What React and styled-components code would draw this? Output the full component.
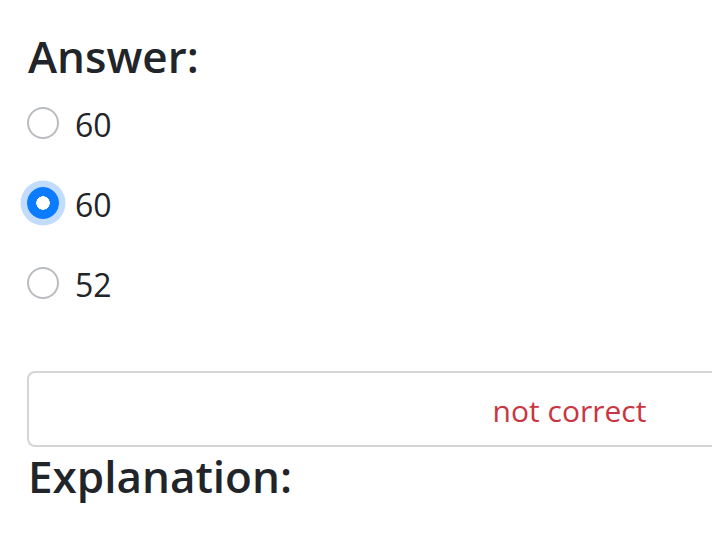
import React from "react";
import styled, { createGlobalStyle } from "styled-components";

const Global = createGlobalStyle`
  html, body { margin: 0; padding: 0; background: #fff; }
  body {
    font-family: "Open Sans", "Noto Sans", sans-serif;
    color: #212529;
    overflow: hidden;
  }
`;

const Page = styled.div`
  padding: 30px 0 0 27px;
  width: 1085px;
`;

const Heading = styled.h5`
  margin: 0;
  font-size: 44px;
  font-weight: 600;
  line-height: 1.2;
  padding-left: 1px;
`;

const Options = styled.div`
  display: flex;
  flex-direction: column;
`;

const Option = styled.label`
  display: flex;
  align-items: center;
  height: 80px;
  gap: 16px;
  font-size: 32px;
  line-height: 1;
  cursor: pointer;
`;

const Radio = styled.input.attrs({ type: "radio" })`
  appearance: none;
  margin: 0;
  width: 32px;
  height: 32px;
  border-radius: 50%;
  flex: none;
  box-sizing: border-box;
  border: 2px solid #b9bcc0;
  background: #fff;
  &:checked {
    border-color: #0b7cff;
    background: radial-gradient(circle, #fff 0 6.5px, #0b7cff 7px);
    box-shadow: 0 0 0 6.5px #c1dcfd;
  }
  &:focus { outline: none; }
`;

const Label = styled.span`
  position: relative;
  top: 2px;
`;

const ResultBox = styled.div`
  margin-top: 48px;
  box-sizing: border-box;
  height: 76px;
  border: 2px solid #d3d5d7;
  border-radius: 8px;
  display: flex;
  align-items: center;
  justify-content: center;
`;

const ResultText = styled.span`
  color: #c9363f;
  font-size: 30px;
  position: relative;
  top: 2px;
`;

const Explanation = styled(Heading)`
  margin-top: 3px;
`;

export default function App() {
  const options = [
    { value: "60", checked: false },
    { value: "60", checked: true },
    { value: "52", checked: false },
  ];
  return (
    <>
      <Global />
      <Page>
        <Heading>Answer:</Heading>
        <Options>
          {options.map((o, i) => (
            <Option key={i}>
              <Radio name="answer" defaultChecked={o.checked} />
              <Label>{o.value}</Label>
            </Option>
          ))}
        </Options>
        <ResultBox>
          <ResultText>not correct</ResultText>
        </ResultBox>
        <Explanation>Explanation:</Explanation>
      </Page>
    </>
  );
}
